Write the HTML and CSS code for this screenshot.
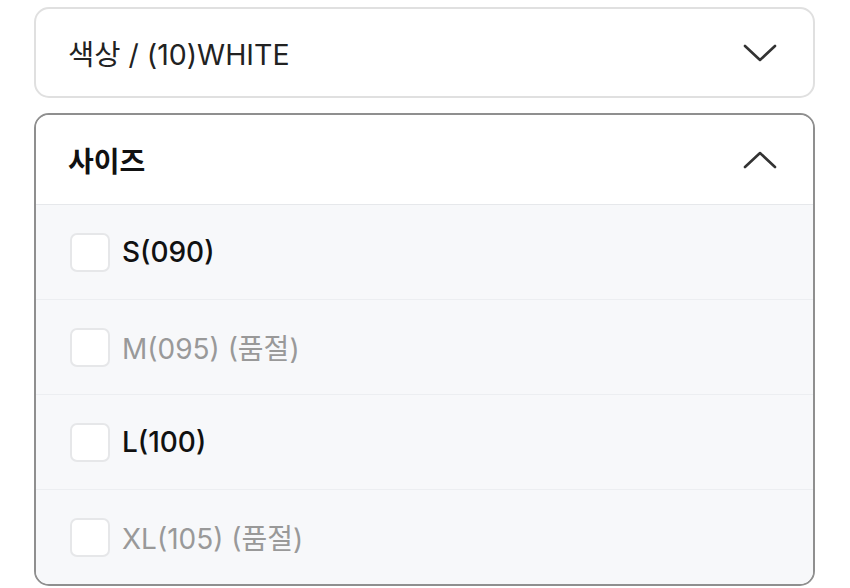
FILE: index.html
```html
<!DOCTYPE html>
<html>
<head>
    <title>옵션 선택</title>
    <link rel="stylesheet" href="styles.css">
</head>
<body>
    <div class="options">
        <div class="select">
            <span class="select-label">색상 / (10)WHITE</span>
            <svg class="chevron" width="34" height="20" viewBox="0 0 34 20">
                <polyline points="2,3 17,17 32,3" />
            </svg>
        </div>

        <div class="select open">
            <div class="select-head">
                <span class="select-title">사이즈</span>
                <svg class="chevron" width="34" height="20" viewBox="0 0 34 20">
                    <polyline points="2,17 17,3 32,17" />
                </svg>
            </div>
            <ul class="size-list">
                <li class="size-item">
                    <span class="check"></span>
                    <span class="size-name">S(090)</span>
                </li>
                <li class="size-item soldout">
                    <span class="check"></span>
                    <span class="size-name">M(095) (품절)</span>
                </li>
                <li class="size-item">
                    <span class="check"></span>
                    <span class="size-name">L(100)</span>
                </li>
                <li class="size-item soldout">
                    <span class="check"></span>
                    <span class="size-name">XL(105) (품절)</span>
                </li>
            </ul>
        </div>
    </div>
</body>
</html>
```

FILE: styles.css
```css
body {
    margin: 0;
    background: #fff;
    font-family: Inter, "Noto Sans CJK KR", sans-serif;
    color: #111;
}

.options {
    width: 781px;
    margin: 7px 0 0 34px;
    display: flex;
    flex-direction: column;
    gap: 15px;
}

.select {
    border: 2px solid #e0e0e0;
    border-radius: 15px;
    height: 91px;
    box-sizing: border-box;
    padding: 0 36px 0 32px;
    display: flex;
    align-items: center;
    justify-content: space-between;
}

.select-label {
    font-size: 28.5px;
    color: #222;
}

.chevron polyline {
    fill: none;
    stroke: #333;
    stroke-width: 2.6;
    stroke-linecap: round;
    stroke-linejoin: round;
}

.select.open {
    height: auto;
    padding: 0;
    display: block;
    border-color: #8f8f8f;
    overflow: hidden;
}

.select-head {
    height: 89px;
    padding: 0 36px 0 32px;
    display: flex;
    align-items: center;
    justify-content: space-between;
    border-bottom: 1px solid #e6e8eb;
    background: #fff;
}

.select-title {
    font-size: 28px;
    font-weight: 700;
    color: #111;
}

.size-list {
    list-style: none;
    margin: 0;
    padding: 0;
    background: #f7f8fa;
}

.size-item {
    height: 95px;
    box-sizing: border-box;
    padding: 0 34px;
    display: flex;
    align-items: center;
    gap: 12px;
    border-bottom: 1px solid #eceef1;
}

.size-item:last-child {
    border-bottom: none;
    height: 94px;
}

.check {
    width: 40px;
    height: 39px;
    box-sizing: border-box;
    border: 2px solid #e6e7e9;
    border-radius: 7px;
    background: #fff;
}

.size-name {
    font-size: 28px;
    font-weight: 500;
    color: #111;
}

.soldout .size-name {
    color: #999;
    font-weight: 400;
}
```
